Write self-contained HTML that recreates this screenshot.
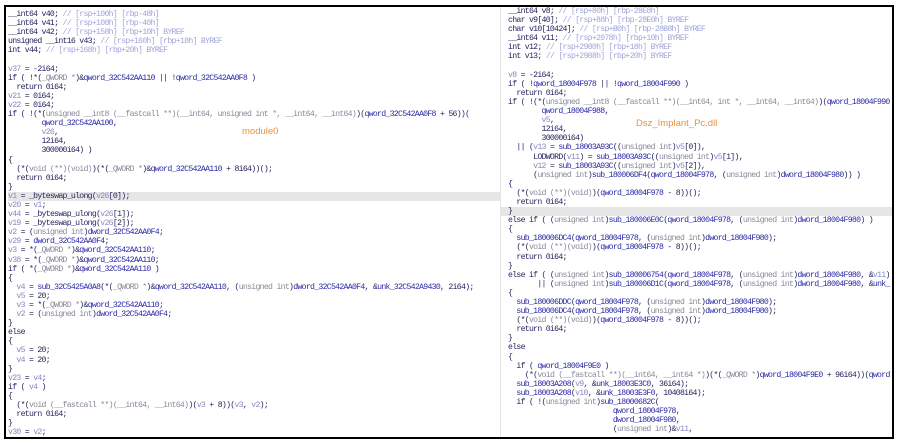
<!DOCTYPE html>
<html><head><meta charset="utf-8"><style>
body{margin:0;width:899px;height:443px;background:#fff;overflow:hidden;position:relative}
.frame{position:absolute;left:4px;top:5px;width:886px;height:430px;border:2px solid #000;overflow:hidden;background:#fff}
.code{position:absolute;font:8.2px "Liberation Mono",monospace;letter-spacing:-0.72px;color:#262660;white-space:normal}
.code div{height:9.1px;line-height:9.1px;white-space:pre;overflow:visible}
.v{color:#8888c2}.g{color:#2a2aa6}.c{color:#a0a6d8}.t{color:#8a8a9a}
.hl{background:#e6e6e6}
#L{left:2px;top:3px;width:492px}
#R{left:494px;top:0px;width:392px;height:440px;background:#fff;border-left:1px solid #e4e4e4;overflow:hidden}
#R div{padding-left:7px}
.lab{position:absolute;font:9.5px "Liberation Sans",sans-serif;color:#e8903c}
</style></head><body>
<div class="frame">
<div class="code" id="L">
<div>__int64 v40; <span class="c">// [rsp+100h] [rbp-48h]</span></div>
<div>__int64 v41; <span class="c">// [rsp+108h] [rbp-40h]</span></div>
<div>__int64 v42; <span class="c">// [rsp+158h] [rbp+10h] BYREF</span></div>
<div>unsigned __int16 v43; <span class="c">// [rsp+160h] [rbp+18h] BYREF</span></div>
<div>int v44; <span class="c">// [rsp+168h] [rbp+20h] BYREF</span></div>
<div> </div>
<div><span class="v">v37</span> = -2i64;</div>
<div>if ( !*(<span class="t">_QWORD *</span>)&amp;<span class="g">qword_32C542AA110</span> || !<span class="g">qword_32C542AA0F8</span> )</div>
<div>  return 0i64;</div>
<div><span class="v">v21</span> = 0i64;</div>
<div><span class="v">v22</span> = 0i64;</div>
<div>if ( !(*(<span class="t">unsigned __int8 (__fastcall **)(__int64, unsigned int *, __int64, __int64)</span>)(<span class="g">qword_32C542AA0F8</span> + 56))(</div>
<div>        <span class="g">qword_32C542AA100</span>,</div>
<div>        <span class="v">v26</span>,</div>
<div>        12i64,</div>
<div>        300000i64) )</div>
<div>{</div>
<div>  (*(<span class="t">void (**)(void)</span>)(*(<span class="t">_QWORD *</span>)&amp;<span class="g">qword_32C542AA110</span> + 8i64))();</div>
<div>  return 0i64;</div>
<div>}</div>
<div class="hl"><span class="v">v1</span> = _byteswap_ulong(<span class="v">v26</span>[0]);</div>
<div><span class="v">v20</span> = <span class="v">v1</span>;</div>
<div><span class="v">v44</span> = _byteswap_ulong(<span class="v">v26</span>[1]);</div>
<div><span class="v">v19</span> = _byteswap_ulong(<span class="v">v26</span>[2]);</div>
<div><span class="v">v2</span> = (<span class="t">unsigned int</span>)<span class="g">dword_32C542AA0F4</span>;</div>
<div><span class="v">v29</span> = <span class="g">dword_32C542AA0F4</span>;</div>
<div><span class="v">v3</span> = *(<span class="t">_QWORD *</span>)&amp;<span class="g">qword_32C542AA110</span>;</div>
<div><span class="v">v38</span> = *(<span class="t">_QWORD *</span>)&amp;<span class="g">qword_32C542AA110</span>;</div>
<div>if ( *(<span class="t">_QWORD *</span>)&amp;<span class="g">qword_32C542AA110</span> )</div>
<div>{</div>
<div>  <span class="v">v4</span> = <span class="g">sub_32C5425A0A8</span>(*(<span class="t">_QWORD *</span>)&amp;<span class="g">qword_32C542AA110</span>, (<span class="t">unsigned int</span>)<span class="g">dword_32C542AA0F4</span>, &amp;<span class="g">unk_32C542A9430</span>, 2i64);</div>
<div>  <span class="v">v5</span> = 20;</div>
<div>  <span class="v">v3</span> = *(<span class="t">_QWORD *</span>)&amp;<span class="g">qword_32C542AA110</span>;</div>
<div>  <span class="v">v2</span> = (<span class="t">unsigned int</span>)<span class="g">dword_32C542AA0F4</span>;</div>
<div>}</div>
<div>else</div>
<div>{</div>
<div>  <span class="v">v5</span> = 20;</div>
<div>  <span class="v">v4</span> = 20;</div>
<div>}</div>
<div><span class="v">v23</span> = <span class="v">v4</span>;</div>
<div>if ( <span class="v">v4</span> )</div>
<div>{</div>
<div>  (*(<span class="t">void (__fastcall **)(__int64, __int64)</span>)(<span class="v">v3</span> + 8))(<span class="v">v3</span>, <span class="v">v2</span>);</div>
<div>  return 0i64;</div>
<div>}</div>
<div><span class="v">v30</span> = <span class="v">v2</span>;</div>
</div>
<div class="lab" style="left:236px;top:119px">module0</div>
<div class="code" id="R">
<div>__int64 v8; <span class="c">// [rsp+80h] [rbp-28E8h]</span></div>
<div>char v9[40]; <span class="c">// [rsp+88h] [rbp-28E0h] BYREF</span></div>
<div>char v10[10424]; <span class="c">// [rsp+B0h] [rbp-28B8h] BYREF</span></div>
<div>__int64 v11; <span class="c">// [rsp+2978h] [rbp+10h] BYREF</span></div>
<div>int v12; <span class="c">// [rsp+2980h] [rbp+18h] BYREF</span></div>
<div>int v13; <span class="c">// [rsp+2988h] [rbp+20h] BYREF</span></div>
<div> </div>
<div><span class="v">v8</span> = -2i64;</div>
<div>if ( !<span class="g">qword_18004F978</span> || !<span class="g">qword_18004F990</span> )</div>
<div>  return 0i64;</div>
<div>if ( !(*(<span class="t">unsigned __int8 (__fastcall **)(__int64, int *, __int64, __int64)</span>)(<span class="g">qword_18004F990</span></div>
<div>        <span class="g">qword_18004F988</span>,</div>
<div>        <span class="v">v5</span>,</div>
<div>        12i64,</div>
<div>        300000i64)</div>
<div>  || (<span class="v">v13</span> = <span class="g">sub_18003A93C</span>((<span class="t">unsigned int</span>)<span class="v">v5</span>[0]),</div>
<div>      LODWORD(<span class="v">v11</span>) = <span class="g">sub_18003A93C</span>((<span class="t">unsigned int</span>)<span class="v">v5</span>[1]),</div>
<div>      <span class="v">v12</span> = <span class="g">sub_18003A93C</span>((<span class="t">unsigned int</span>)<span class="v">v5</span>[2]),</div>
<div>      (<span class="t">unsigned int</span>)<span class="g">sub_180006DF4</span>(<span class="g">qword_18004F978</span>, (<span class="t">unsigned int</span>)<span class="g">dword_18004F980</span>)) )</div>
<div>{</div>
<div>  (*(<span class="t">void (**)(void)</span>)(<span class="g">qword_18004F978</span> - 8))();</div>
<div>  return 0i64;</div>
<div class="hl">}</div>
<div>else if ( (<span class="t">unsigned int</span>)<span class="g">sub_180006E0C</span>(<span class="g">qword_18004F978</span>, (<span class="t">unsigned int</span>)<span class="g">dword_18004F980</span>) )</div>
<div>{</div>
<div>  <span class="g">sub_180006DC4</span>(<span class="g">qword_18004F978</span>, (<span class="t">unsigned int</span>)<span class="g">dword_18004F980</span>);</div>
<div>  (*(<span class="t">void (**)(void)</span>)(<span class="g">qword_18004F978</span> - 8))();</div>
<div>  return 0i64;</div>
<div>}</div>
<div>else if ( (<span class="t">unsigned int</span>)<span class="g">sub_180006754</span>(<span class="g">qword_18004F978</span>, (<span class="t">unsigned int</span>)<span class="g">dword_18004F980</span>, &amp;<span class="v">v11</span>)</div>
<div>       || (<span class="t">unsigned int</span>)<span class="g">sub_180006D1C</span>(<span class="g">qword_18004F978</span>, (<span class="t">unsigned int</span>)<span class="g">dword_18004F980</span>, &amp;<span class="g">unk_</span></div>
<div>{</div>
<div>  <span class="g">sub_180006DDC</span>(<span class="g">qword_18004F978</span>, (<span class="t">unsigned int</span>)<span class="g">dword_18004F980</span>);</div>
<div>  <span class="g">sub_180006DC4</span>(<span class="g">qword_18004F978</span>, (<span class="t">unsigned int</span>)<span class="g">dword_18004F980</span>);</div>
<div>  (*(<span class="t">void (**)(void)</span>)(<span class="g">qword_18004F978</span> - 8))();</div>
<div>  return 0i64;</div>
<div>}</div>
<div>else</div>
<div>{</div>
<div>  if ( <span class="g">qword_18004F9E0</span> )</div>
<div>    (*(<span class="t">void (__fastcall **)(__int64, __int64 *)</span>)(*(<span class="t">_QWORD *</span>)<span class="g">qword_18004F9E0</span> + 96i64))(<span class="g">qword</span></div>
<div>  <span class="g">sub_18003A208</span>(<span class="v">v9</span>, &amp;<span class="g">unk_18003E3C0</span>, 36i64);</div>
<div>  <span class="g">sub_18003A208</span>(<span class="v">v10</span>, &amp;<span class="g">unk_18003E3F0</span>, 10408i64);</div>
<div>  if ( !(<span class="t">unsigned int</span>)<span class="g">sub_18000682C</span>(</div>
<div>                         <span class="g">qword_18004F978</span>,</div>
<div>                         <span class="g">dword_18004F980</span>,</div>
<div>                         (<span class="t">unsigned int</span>)&amp;<span class="v">v11</span>,</div>
</div>
<div class="lab" style="left:630px;top:111px">Dsz_Implant_Pc.dll</div>
</div>
</body></html>
